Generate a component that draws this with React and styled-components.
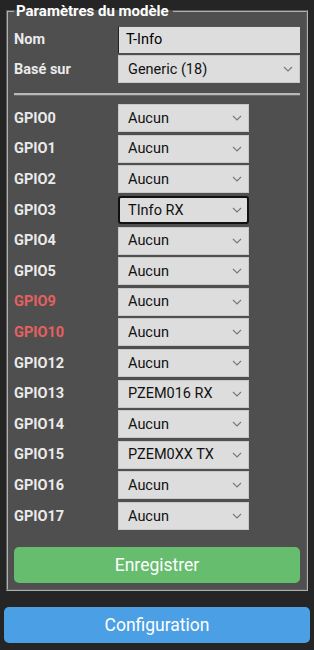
import React from 'react';
import styled, {createGlobalStyle} from 'styled-components';

const Global = createGlobalStyle`
    html, body {
        margin: 0;
        padding: 0;
        background: #252525;
    }
    body {
        font-family: Roboto, "Noto Sans", sans-serif;
        color: #eaeaea;
    }
`;

const Page = styled.div`
    width: 314px;
    height: 650px;
    padding: 0 4px;
    box-sizing: border-box;
    display: flex;
    flex-direction: column;
`;

const Fieldset = styled.fieldset`
    margin: 3px 2px 0 2px;
    padding: 5px 6px 6px 6px;
    min-width: 0;
    background: #4f4f4f;
    border: 2px groove #b0b0b0;
    display: flex;
    flex-direction: column;
`;

const Legend = styled.legend`
    font-weight: bold;
    font-size: 15px;
    color: #ffffff;
    padding: 0 4px 0 2px;
    line-height: 16px;
`;

const Row = styled.div`
    display: flex;
    align-items: center;
    height: ${p => p.$h || 30.6}px;
`;

const Label = styled.div`
    width: 104px;
    flex: none;
    font-weight: bold;
    font-size: 14.5px;
    color: ${p => p.$warn ? '#e66060' : '#eaeaea'};
`;

const TextInput = styled.input`
    flex: 1;
    min-width: 0;
    width: 0;
    height: 27px;
    box-sizing: border-box;
    background: #dddddd;
    border: none;
    border-left: 1px solid #222;
    border-top: 1px solid #555;
    font-family: Roboto, sans-serif;
    font-size: 14.5px;
    color: #000;
    padding: 0 7px;
    outline: none;
`;

const SelectBox = styled.div`
    width: ${p => p.$full ? 'auto' : '131px'};
    flex: ${p => p.$full ? 1 : 'none'};
    height: 28px;
    box-sizing: border-box;
    background: #dddddd;
    border: ${p => p.$focus ? '2px solid #111' : '1px solid #c8c8c8'};
    border-radius: ${p => p.$focus ? '3px' : '0'};
    display: flex;
    align-items: center;
    justify-content: space-between;
    padding: 0 ${p => p.$focus ? '5px' : '6px'} 0 ${p => p.$focus ? '8px' : '9px'};
    font-size: 14.5px;
    color: #111;
`;

const Chevron = () => (
    <svg width="10" height="6" viewBox="0 0 10 6">
        <path d="M1 1 L5 5 L9 1" fill="none" stroke="#777" strokeWidth="1.1" />
    </svg>
);

const Rule = styled.hr`
    width: 100%;
    margin: 9px 0 7px 0;
    border: none;
    height: 2px;
    background: #b8b8b8;
    border-bottom: 1px solid #6a6a6a;
`;

const Button = styled.button`
    height: 36px;
    border: none;
    border-radius: 5px;
    background: ${p => p.$green ? '#66bd6d' : '#4b9fe4'};
    color: #ffffff;
    font-family: Roboto, sans-serif;
    font-size: 17.5px;
    cursor: pointer;
    width: 100%;
`;

const SaveWrap = styled.div`
    margin-top: 16px;
`;

const ConfWrap = styled.div`
    margin-top: 16px;
`;

const gpios = [
    ['GPIO0', 'Aucun'],
    ['GPIO1', 'Aucun'],
    ['GPIO2', 'Aucun'],
    ['GPIO3', 'TInfo RX', false, true],
    ['GPIO4', 'Aucun'],
    ['GPIO5', 'Aucun'],
    ['GPIO9', 'Aucun', true],
    ['GPIO10', 'Aucun', true],
    ['GPIO12', 'Aucun'],
    ['GPIO13', 'PZEM016 RX'],
    ['GPIO14', 'Aucun'],
    ['GPIO15', 'PZEM0XX TX'],
    ['GPIO16', 'Aucun'],
    ['GPIO17', 'Aucun'],
];

export default function App() {
    return (
        <>
            <Global />
            <Page>
                <Fieldset>
                    <Legend>Paramètres du modèle</Legend>
                    <Row $h={30}>
                        <Label>Nom</Label>
                        <TextInput defaultValue="T-Info" />
                    </Row>
                    <Row $h={30}>
                        <Label>Basé sur</Label>
                        <SelectBox $full>Generic (18)<Chevron /></SelectBox>
                    </Row>
                    <Rule />
                    {gpios.map(([name, val, warn, focus]) => (
                        <Row key={name}>
                            <Label $warn={warn}>{name}</Label>
                            <SelectBox $focus={focus}>{val}<Chevron /></SelectBox>
                        </Row>
                    ))}
                    <SaveWrap>
                        <Button $green>Enregistrer</Button>
                    </SaveWrap>
                </Fieldset>
                <ConfWrap>
                    <Button>Configuration</Button>
                </ConfWrap>
            </Page>
        </>
    );
}
